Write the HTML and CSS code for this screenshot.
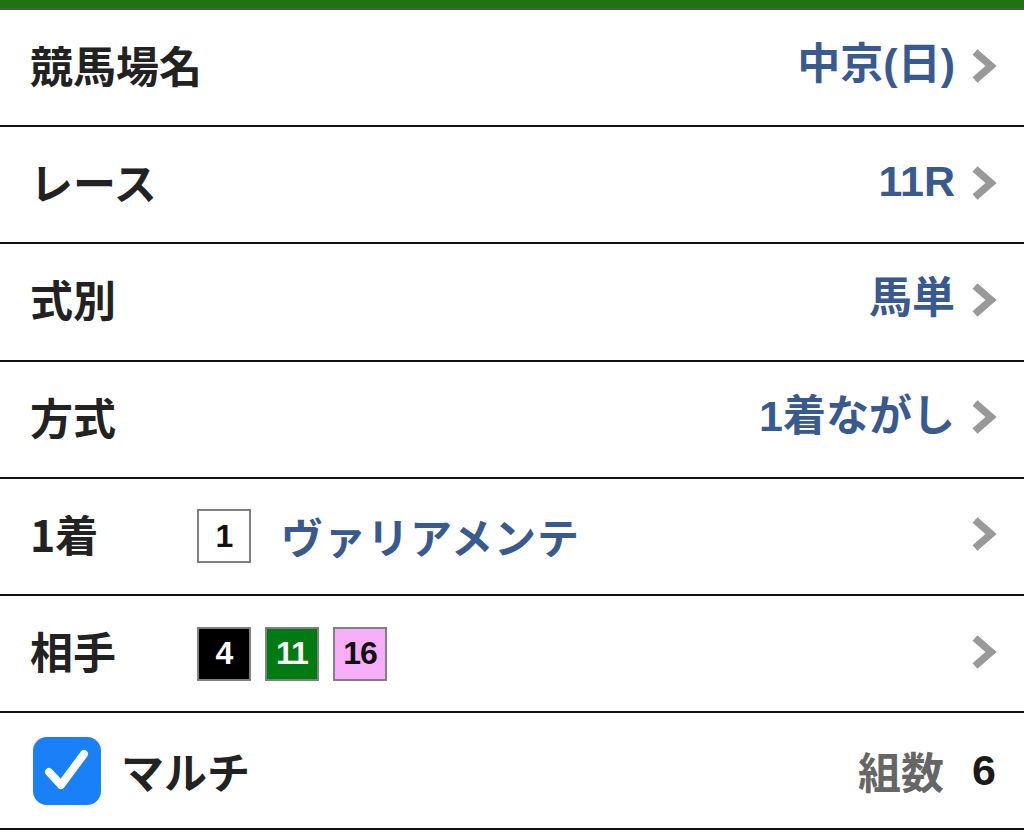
FILE: index.html
```html
<!DOCTYPE html>
<html lang="ja">
<head>
<meta charset="utf-8">
<link rel="stylesheet" href="styles.css">
</head>
<body>
<div class="topbar"></div>
<ul class="list">
  <li class="row">
    <span class="label">競馬場名</span>
    <span class="value">中京(日)</span>
    <span class="chev"><svg viewBox="0 0 26 36" width="26" height="36"><path d="M4 4 L20 18 L4 32" fill="none" stroke="#999" stroke-width="7.5"/></svg></span>
  </li>
  <li class="row">
    <span class="label">レース</span>
    <span class="value">11R</span>
    <span class="chev"><svg viewBox="0 0 26 36" width="26" height="36"><path d="M4 4 L20 18 L4 32" fill="none" stroke="#999" stroke-width="7.5"/></svg></span>
  </li>
  <li class="row">
    <span class="label">式別</span>
    <span class="value">馬単</span>
    <span class="chev"><svg viewBox="0 0 26 36" width="26" height="36"><path d="M4 4 L20 18 L4 32" fill="none" stroke="#999" stroke-width="7.5"/></svg></span>
  </li>
  <li class="row">
    <span class="label">方式</span>
    <span class="value">1着ながし</span>
    <span class="chev"><svg viewBox="0 0 26 36" width="26" height="36"><path d="M4 4 L20 18 L4 32" fill="none" stroke="#999" stroke-width="7.5"/></svg></span>
  </li>
  <li class="row">
    <span class="label label-short">1着</span>
    <span class="horses">
      <span class="num num-white">1</span>
      <span class="horse-name">ヴァリアメンテ</span>
    </span>
    <span class="chev"><svg viewBox="0 0 26 36" width="26" height="36"><path d="M4 4 L20 18 L4 32" fill="none" stroke="#999" stroke-width="7.5"/></svg></span>
  </li>
  <li class="row">
    <span class="label label-short">相手</span>
    <span class="horses">
      <span class="num num-black">4</span>
      <span class="num num-green">11</span>
      <span class="num num-pink">16</span>
    </span>
    <span class="chev"><svg viewBox="0 0 26 36" width="26" height="36"><path d="M4 4 L20 18 L4 32" fill="none" stroke="#999" stroke-width="7.5"/></svg></span>
  </li>
  <li class="row row-multi">
    <span class="check"><svg viewBox="0 0 68 68" width="68" height="68"><rect x="0" y="0" width="68" height="68" rx="14" fill="#1a80f7"/><path d="M16 35 L28 48 L51 17" fill="none" stroke="#fff" stroke-width="8" stroke-linecap="round" stroke-linejoin="round"/></svg></span>
    <span class="label">マルチ</span>
    <span class="count-label">組数</span>
    <span class="count">6</span>
  </li>
</ul>
</body>
</html>
```
FILE: styles.css
```css
* { box-sizing: border-box; }
html, body {
  margin: 0;
  padding: 0;
  background: #fff;
  width: 1024px;
  height: 840px;
  overflow: hidden;
}
body {
  font-family: "Noto Sans CJK JP", "Liberation Sans", sans-serif;
  font-weight: 700;
  color: #222;
}
.topbar {
  height: 10px;
  background: #217115;
  border-bottom: 2px solid #555;
}
.list {
  list-style: none;
  margin: 0;
  padding: 0;
}
.row {
  height: 117.2px;
  border-bottom: 2px solid #111;
  display: flex;
  align-items: center;
  padding: 0 27px 6px 30px;
}
.label {
  font-size: 43px;
  line-height: 1;
  color: #222;
}
.label-short {
  width: 167px;
}
.value {
  margin-left: auto;
  font-size: 43px;
  line-height: 1;
  color: #385a8e;
  font-family: "Liberation Sans", "Noto Sans CJK JP", sans-serif;
}
.chev {
  width: 26px;
  height: 36px;
  margin-left: 16px;
  margin-top: 2px;
  display: flex;
}
.horses {
  flex: 1;
  display: flex;
  align-items: center;
  gap: 14px;
  padding-top: 6px;
}
.num {
  width: 54px;
  height: 54px;
  border: 2px solid #808080;
  display: flex;
  align-items: center;
  justify-content: center;
  font-family: "Liberation Sans", sans-serif;
  font-size: 32px;
  font-weight: 700;
  letter-spacing: -1px;
}
.num-white { background: #fff; color: #111; }
.num-black { background: #000; color: #fff; }
.num-green { background: #007a12; color: #fff; }
.num-pink { background: #f8adf8; color: #111; }
.horse-name {
  margin-left: 16px;
  font-size: 42px;
  line-height: 1;
  color: #385a8e;
  letter-spacing: 1px;
}
.row-multi {
  padding-left: 33px;
  padding-right: 28px;
  padding-bottom: 0;
}
.check {
  width: 68px;
  height: 68px;
  margin-right: 20px;
  display: flex;
}
.count-label {
  margin-left: auto;
  font-size: 43px;
  line-height: 1;
  color: #666;
}
.count {
  margin-left: 28px;
  font-family: "Liberation Sans", sans-serif;
  font-size: 43px;
  line-height: 1;
  color: #1a1a1a;
}
```
